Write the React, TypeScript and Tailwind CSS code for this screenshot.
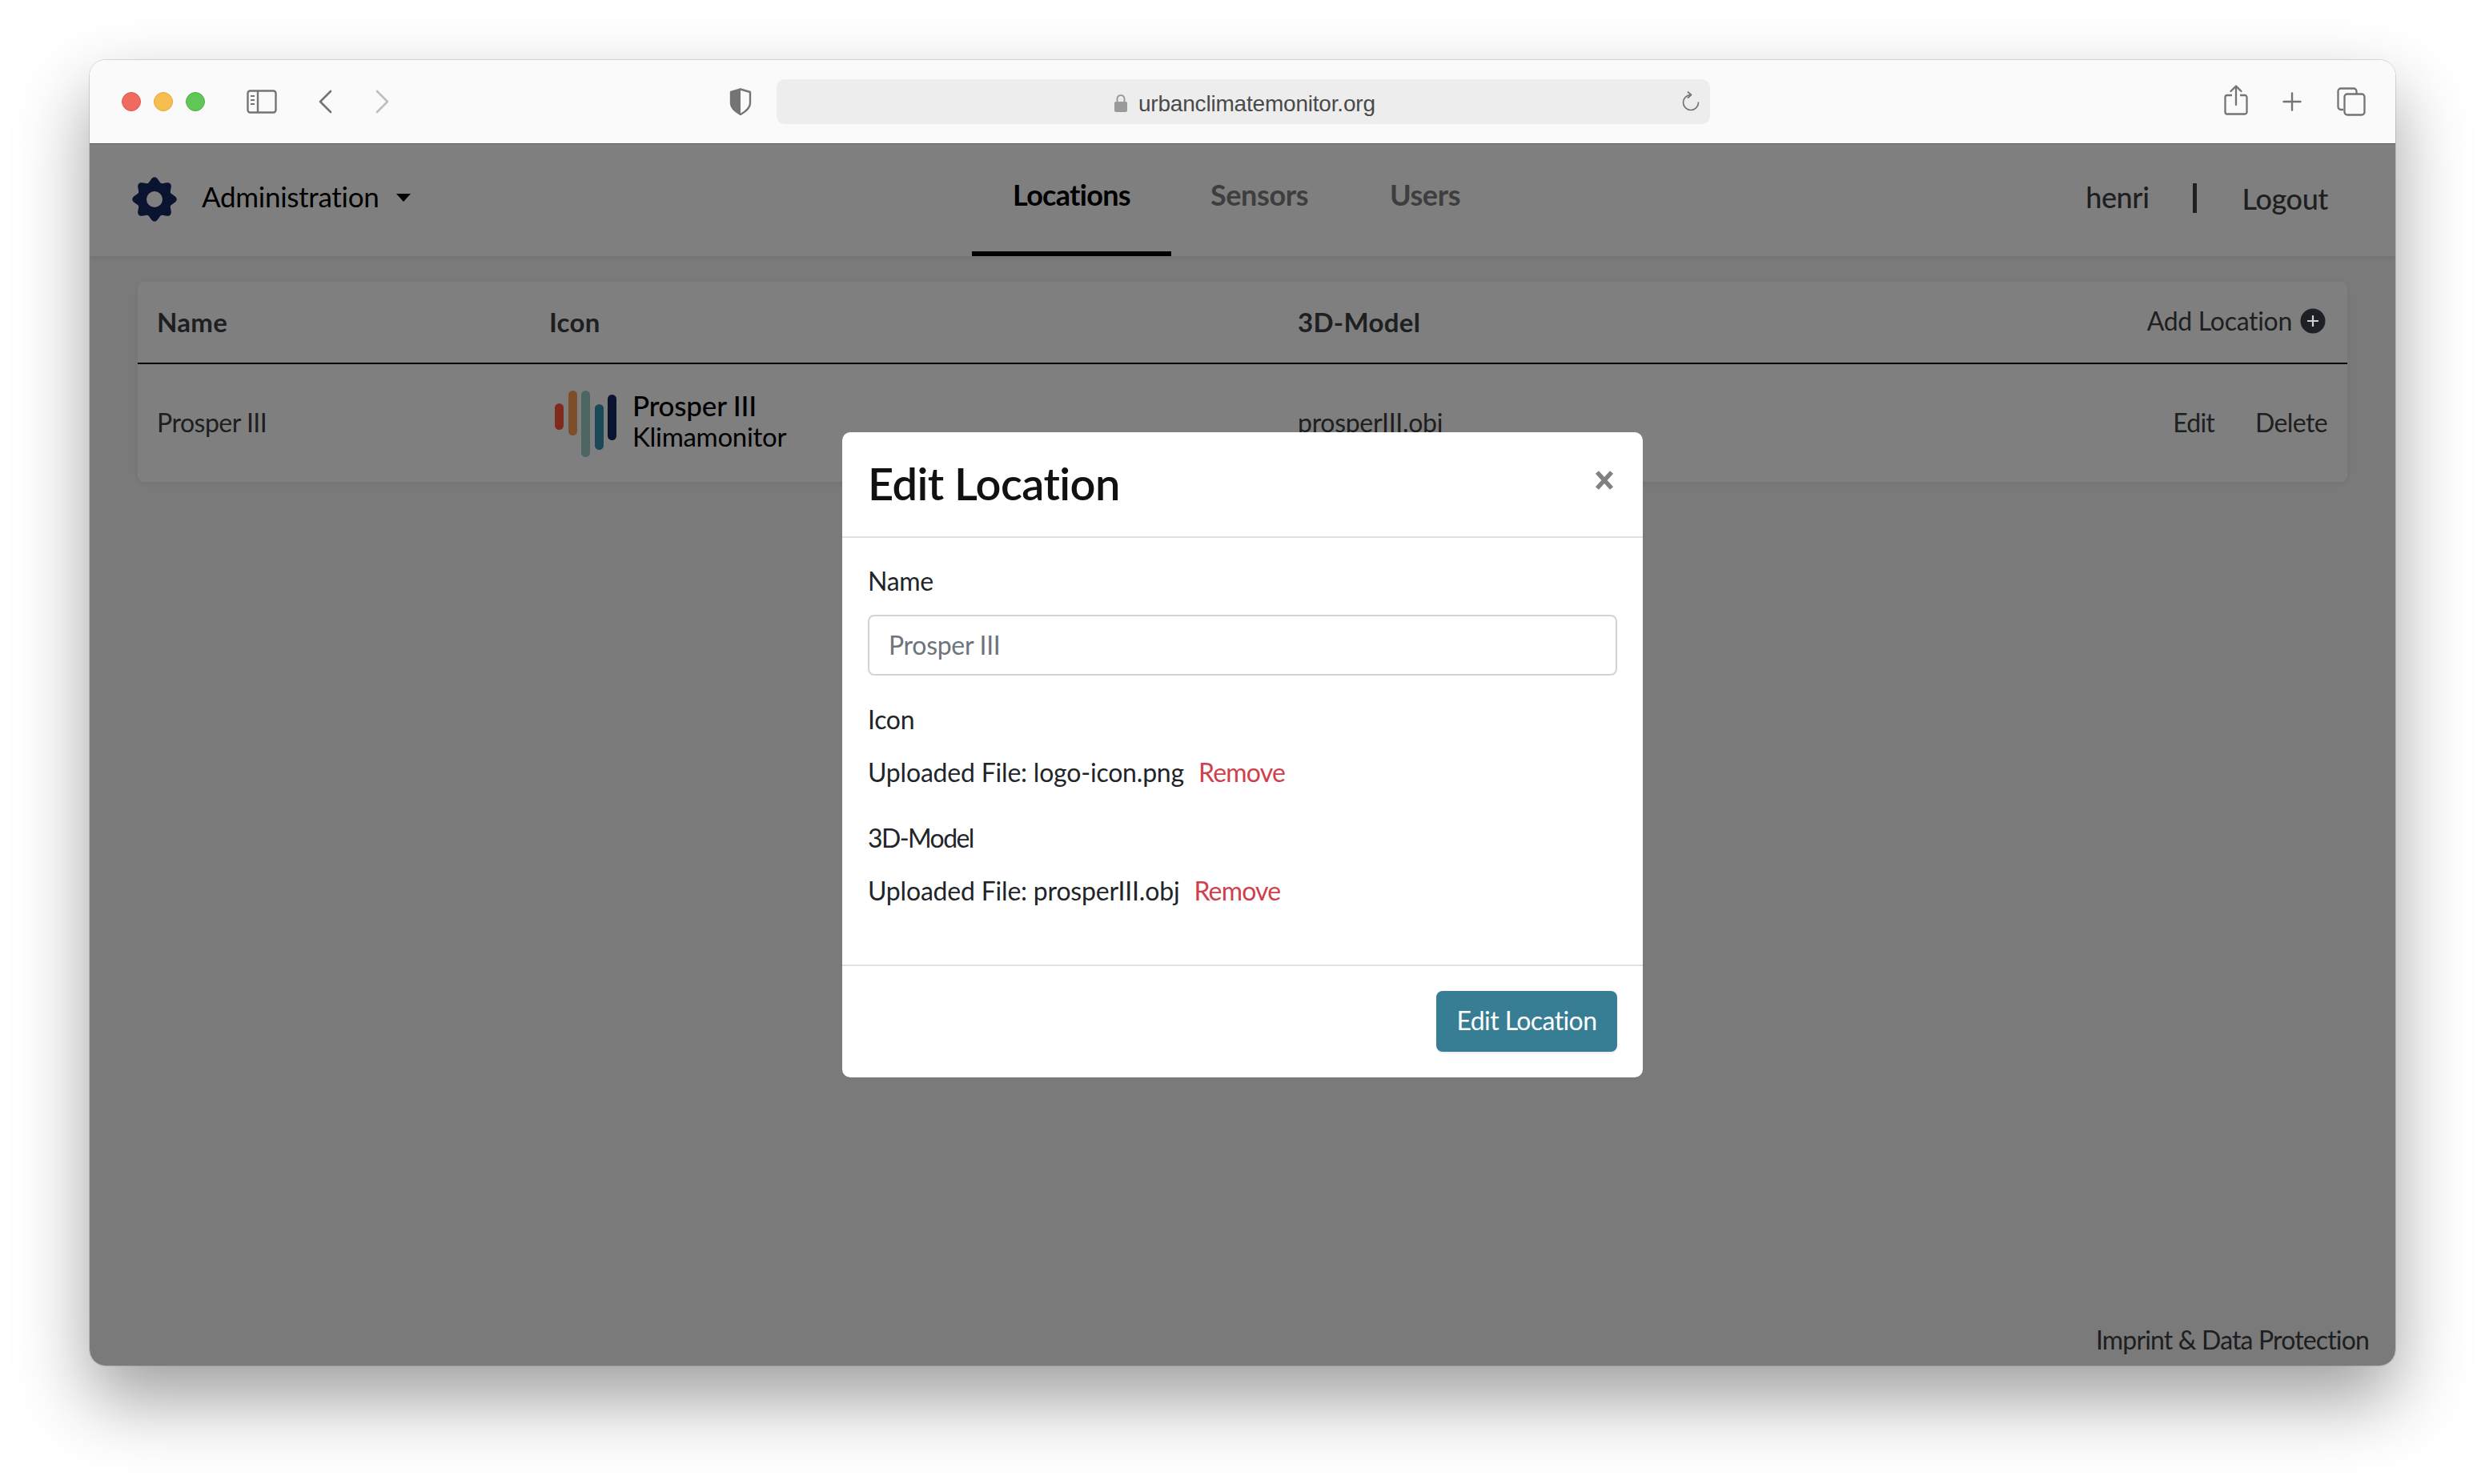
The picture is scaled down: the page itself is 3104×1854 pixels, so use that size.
import { Plus } from 'lucide-react';

function Gear() {
  // eight rounded teeth around a round hole
  const pts: string[] = [];
  for (let i = 0; i < 240; i++) {
    const t = (i / 240) * Math.PI * 2;
    const r = 24.7 + 3 * Math.cos(8 * t);
    pts.push(`${(28 + r * Math.sin(t)).toFixed(2)} ${(28 - r * Math.cos(t)).toFixed(2)}`);
  }
  const d = `M${pts.join('L')}Z M28 18a10 10 0 1 0 0 20a10 10 0 1 0 0-20Z`;
  return (
    <svg width="56" height="56" viewBox="0 0 56 56" className="shrink-0 -mt-[2px]">
      <path d={d} fill="#14265f" fillRule="evenodd" />
    </svg>
  );
}

function Logo() {
  return (
    <svg width="78" height="84" viewBox="0 0 78 84" className="shrink-0">
      <rect x="0" y="17" width="11" height="33" rx="5.5" fill="#fe5434" />
      <rect x="17" y="1" width="11" height="56" rx="5.5" fill="#fa9c54" />
      <rect x="33" y="1" width="11" height="83" rx="5.5" fill="#9ac8c0" />
      <rect x="50" y="18" width="11" height="57" rx="5.5" fill="#3690ae" />
      <rect x="66" y="6" width="11" height="57" rx="5.5" fill="#142660" />
    </svg>
  );
}

function Toolbar() {
  return (
    <div className="h-[105px] shrink-0 bg-[#fafafa] flex items-center relative z-20 border-b border-[#5c5c5c]">
      <div className="flex items-center gap-4 ml-10">
        <div className="w-6 h-6 rounded-full bg-[#ef6b5f] border border-[#dd5b50]" />
        <div className="w-6 h-6 rounded-full bg-[#f6bd4f] border border-[#e0a93f]" />
        <div className="w-6 h-6 rounded-full bg-[#60c655] border border-[#50b046]" />
      </div>
      <svg width="38" height="30" viewBox="0 0 38 30" fill="none" className="ml-[52px]">
        <rect x="1.5" y="1.5" width="35" height="27" rx="3" stroke="#747474" strokeWidth="2.4" />
        <path d="M14 2v26" stroke="#747474" strokeWidth="2.4" />
        <path d="M5 8h5M5 13h5M5 18h5" stroke="#747474" strokeWidth="2" />
      </svg>
      <svg width="18" height="30" viewBox="0 0 18 30" fill="none" className="ml-[51px]">
        <path d="M16 2 3 15l13 13" stroke="#747474" strokeWidth="2.6" strokeLinecap="round" strokeLinejoin="round" />
      </svg>
      <svg width="18" height="30" viewBox="0 0 18 30" fill="none" className="ml-[54px]">
        <path d="m2 2 13 13L2 28" stroke="#bdbdbd" strokeWidth="2.6" strokeLinecap="round" strokeLinejoin="round" />
      </svg>
      <svg width="28" height="34" viewBox="0 0 28 34" className="ml-[424px]">
        <path d="M14 1.5 26 5v14c0 6-5 10-12 14C7 29 2 25 2 19V5Z" fill="none" stroke="#747474" strokeWidth="2.4" strokeLinejoin="round" />
        <path d="M14 1.5 2 5v14c0 6 5 10 12 14Z" fill="#747474" />
      </svg>
      <div className="ml-[31px] w-[1166px] h-14 rounded-[10px] bg-[#ededed] flex items-center relative">
        <div className="flex items-center ml-[421px]">
          <svg width="18" height="24" viewBox="0 0 18 24" fill="none" className="mt-[4px]">
            <path d="M4.5 10V6.500a4.500 4.500 0 0 1 9 0V10" stroke="#9a9a9a" strokeWidth="2" />
            <rect x="1" y="10" width="16" height="13" rx="2" fill="#9a9a9a" />
          </svg>
          <span className="ml-[13px] mt-[6px] text-[28px] tracking-[-0.2px] leading-none text-[#4a4a4a] font-['Liberation_Sans',sans-serif] whitespace-nowrap">urbanclimatemonitor.org</span>
        </div>
        <svg width="24" height="26" viewBox="0 0 24 26" fill="none" className="absolute right-[12px] top-[15px]">
          <path d="M21.500 14a9.500 9.500 0 1 1-9.500-9.500" stroke="#747474" strokeWidth="1.700" strokeLinecap="round" />
          <path d="m8.500 1 4 3.500-4 3.500" stroke="#747474" strokeWidth="1.700" strokeLinecap="round" strokeLinejoin="round" />
        </svg>
      </div>
      <svg width="30" height="38" viewBox="0 0 30 38" fill="none" className="ml-[642px] -mt-[4px]">
        <path d="M10 13H4a2.500 2.500 0 0 0-2.500 2.500V34A2.500 2.500 0 0 0 4 36.500h22a2.500 2.500 0 0 0 2.500-2.500V15.500A2.500 2.500 0 0 0 26 13h-6" stroke="#747474" strokeWidth="2.300" />
        <path d="M15 2v23M8.500 8 15 1.500 21.500 8" stroke="#747474" strokeWidth="2.300" strokeLinecap="round" strokeLinejoin="round" />
      </svg>
      <Plus size={36} strokeWidth={1.6} className="ml-[37px] text-[#747474]" />
      <svg width="36" height="36" viewBox="0 0 36 36" fill="none" className="ml-[38px]">
        <path d="M8 28H5a3.500 3.500 0 0 1-3.500-3.500V5A3.500 3.500 0 0 1 5 1.500h16A3.500 3.500 0 0 1 24.500 5v3" stroke="#747474" strokeWidth="2.300" />
        <rect x="9.500" y="8.500" width="25" height="26" rx="3.500" stroke="#747474" strokeWidth="2.300" />
      </svg>
    </div>
  );
}

function Navbar() {
  return (
    <div className="h-[140px] shrink-0 bg-white flex items-stretch shadow-[0_2px_8px_rgba(0,0,0,0.08)] relative">
      <div className="w-[1102px] shrink-0 flex items-center pl-[53px]">
        <Gear />
        <span className="ml-[31px] pb-[9px] text-[35px] tracking-[-0.3px] text-black">Administration</span>
        <span className="ml-[22px] -mt-[7px] w-0 h-0 border-x-[9px] border-x-transparent border-t-[10px] border-t-black" />
      </div>
      <div className="flex">
        <div className="w-[249px] flex items-center justify-center border-b-[6px] border-black pb-[8px] text-[36px] font-bold tracking-[-0.7px] text-black">Locations</div>
        <div className="w-[220px] flex items-center justify-center pb-[14px] text-[36px] font-bold tracking-[-0.4px] text-[#7d7d7d]">Sensors</div>
        <div className="w-[194px] flex items-center justify-center pb-[14px] text-[36px] font-bold tracking-[-0.4px] text-[#7d7d7d]">Users</div>
      </div>
      <div className="ml-auto pr-[84px] pb-[6px] flex items-center text-[#3a3e42] text-[36px] font-medium tracking-[-0.4px]">
        <span className="-mt-[2px]">henri</span>
        <span className="ml-[54px] w-[5px] h-[37px] bg-[#3a3e42]" />
        <span className="ml-[57px] mt-[2px]">Logout</span>
      </div>
    </div>
  );
}

function LocationsTable() {
  return (
    <div className="mx-[60px] mt-8 bg-white rounded-[8px] shadow-[0_2px_8px_rgba(0,0,0,0.08)] text-[#3a3e42] text-[32px] shrink-0">
      <div className="h-[103px] grid grid-cols-[490px_935px_1fr] items-center pl-[24px] pr-[25px] border-b-2 border-black">
        <div className="font-bold text-[33px] tracking-[0.3px]">Name</div>
        <div className="font-bold text-[33px] tracking-[0.3px]">Icon</div>
        <div className="flex items-center">
          <span className="font-bold text-[33px] tracking-[0.3px]">3D-Model</span>
          <div className="ml-auto mr-[2px] -mt-[4px] flex items-center">
            <span className="tracking-[-0.3px]">Add Location</span>
            <svg width="32" height="32" viewBox="0 0 32 32" className="ml-[10px] relative z-20">
              <circle cx="16" cy="16" r="15.500" fill="#1d2125" />
              <path d="M16 9v14M9 16h14" stroke="#cfcfcf" strokeWidth="2.200" />
            </svg>
          </div>
        </div>
      </div>
      <div className="h-[147px] grid grid-cols-[490px_935px_1fr] items-center pl-[24px] pr-[25px]">
        <div className="pb-[2px] tracking-[-0.5px]">Prosper III</div>
        <div className="flex items-center pl-[7px]">
          <Logo />
          <div className="ml-[19px] -mt-[6px] text-black">
            <div className="text-[35px] leading-[40px] font-medium tracking-[-0.2px]">Prosper III</div>
            <div className="text-[33px] leading-[39px] tracking-[-0.3px]">Klimamonitor</div>
          </div>
        </div>
        <div className="flex items-center pb-[2px]">
          <span className="tracking-[-0.3px]">prosperIII.obj</span>
          <div className="ml-auto flex gap-[51px]">
            <span className="tracking-[-0.8px]">Edit</span>
            <span className="tracking-[-0.6px]">Delete</span>
          </div>
        </div>
      </div>
    </div>
  );
}

function EditModal() {
  return (
    <div className="absolute inset-0 z-10 bg-black/50 flex justify-center pt-[360px]">
      <div className="w-[1000px] h-[806px] bg-white rounded-[10px] flex flex-col text-[32px] text-[#212529]">
        <div className="h-[132px] shrink-0 flex items-start justify-between border-b-2 border-[#dee2e6] px-8 pt-[34px]">
          <span className="text-[56px] font-semibold leading-[60px] tracking-[-0.6px] text-[#111]">Edit Location</span>
          <svg width="24" height="24" viewBox="0 0 24 24" className="mt-[14px] mr-[4px]">
            <path d="M3 2l18 20M21 2 3 22" stroke="#808080" strokeWidth="5.500" />
          </svg>
        </div>
        <div className="flex-1 px-8 pt-[34px]">
          <div className="leading-[40px] tracking-[-0.3px]">Name</div>
          <div className="mt-[22px] h-[76px] rounded-[8px] border-2 border-[#ced4da] flex items-center px-6 text-[#6c757d] tracking-[-0.3px]">Prosper III</div>
          <div className="mt-[35px] leading-[40px] tracking-[-0.3px]">Icon</div>
          <div className="mt-[26px] leading-[40px] tracking-[-0.2px]">
            Uploaded File: logo-icon.png
            <span className="ml-[18px] text-[#cf3f4c] tracking-[-0.8px]">Remove</span>
          </div>
          <div className="mt-[42px] leading-[40px] tracking-[-1.6px]">3D-Model</div>
          <div className="mt-[26px] leading-[40px] tracking-[-0.2px]">
            Uploaded File: prosperIII.obj
            <span className="ml-[18px] text-[#cf3f4c] tracking-[-0.8px]">Remove</span>
          </div>
        </div>
        <div className="h-[141px] shrink-0 border-t-2 border-[#dee2e6] flex justify-end items-start pt-[31px] px-8">
          <button className="w-[226px] h-[76px] pb-[2px] rounded-[8px] bg-[#377e95] text-white tracking-[-0.6px] shadow-[0_2px_3px_rgba(0,0,0,0.08)]">Edit Location</button>
        </div>
      </div>
    </div>
  );
}

export default function App() {
  return (
    <div className="min-h-[1854px] w-[3104px] bg-white pl-[112px] pt-[75px] font-['Lato',sans-serif]">
      <div className="w-[2880px] h-[1631px] rounded-[20px] shadow-[0_0_0_1px_rgba(0,0,0,0.12),0_42px_90px_rgba(0,0,0,0.38)] flex flex-col overflow-hidden">
        <Toolbar />
        <div className="flex-1 relative bg-[#f5f5f5] flex flex-col">
          <Navbar />
          <LocationsTable />
          <div className="mt-auto pr-[33px] pb-[8px] flex justify-end text-[32px] tracking-[-0.85px] text-[#3a3e42]">Imprint &amp; Data Protection</div>
          <EditModal />
        </div>
      </div>
    </div>
  );
}
